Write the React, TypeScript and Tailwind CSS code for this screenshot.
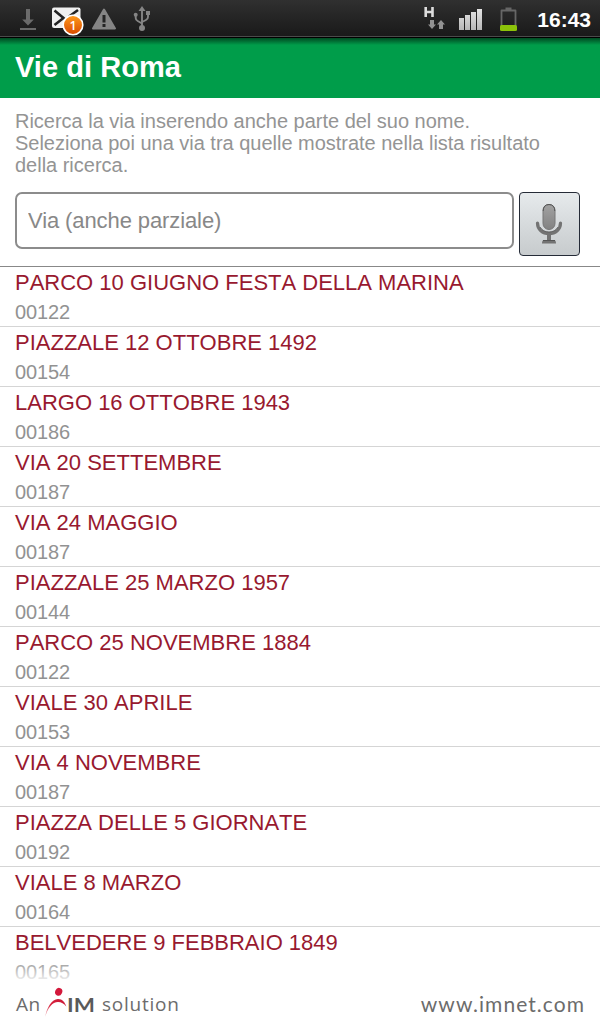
const streets = [
  { name: "PARCO 10 GIUGNO FESTA DELLA MARINA", zip: "00122" },
  { name: "PIAZZALE 12 OTTOBRE 1492", zip: "00154" },
  { name: "LARGO 16 OTTOBRE 1943", zip: "00186" },
  { name: "VIA 20 SETTEMBRE", zip: "00187" },
  { name: "VIA 24 MAGGIO", zip: "00187" },
  { name: "PIAZZALE 25 MARZO 1957", zip: "00144" },
  { name: "PARCO 25 NOVEMBRE 1884", zip: "00122" },
  { name: "VIALE 30 APRILE", zip: "00153" },
  { name: "VIA 4 NOVEMBRE", zip: "00187" },
  { name: "PIAZZA DELLE 5 GIORNATE", zip: "00192" },
  { name: "VIALE 8 MARZO", zip: "00164" },
  { name: "BELVEDERE 9 FEBBRAIO 1849", zip: "00165" },
];

function DownloadIcon() {
  return (
    <svg width="18" height="24" viewBox="0 0 18 24" fill="#6b6b6b">
      <path d="M7 2h4v10.500h3.800L9 18.500 3.200 12.500H7z" />
      <path d="M1 21h16v2H1z" />
    </svg>
  );
}

function MailIcon() {
  return (
    <svg width="34" height="32" viewBox="0 0 34 32">
      <defs>
        <linearGradient id="badge" x1="0" y1="0" x2="0" y2="1">
          <stop offset="0" stopColor="#ff9a1c" />
          <stop offset="1" stopColor="#d94a00" />
        </linearGradient>
      </defs>
      <rect x="0" y="2.500" width="28.500" height="20.500" rx="2" fill="#f0f0f0" />
      <path d="M2.500 5.500l9 7.500-9 7M26 5l-9 6.500" fill="none" stroke="#222" strokeWidth="2.600" />
      <circle cx="21" cy="20" r="9.800" fill="url(#badge)" stroke="#fff" strokeWidth="1.600" />
      <text x="21" y="24.500" textAnchor="middle" fontFamily="Open Sans, sans-serif" fontSize="12.500" fontWeight="600" fill="#fff">
        1
      </text>
    </svg>
  );
}

function WarningIcon() {
  return (
    <svg width="26" height="24" viewBox="0 0 26 24">
      <path d="M13 2.500L24 21.500H2z" fill="#858585" stroke="#858585" strokeWidth="2" strokeLinejoin="round" />
      <path d="M11.500 8h3v7.500h-3zM11.500 17h3v3h-3z" fill="#242424" />
    </svg>
  );
}

function UsbIcon() {
  return (
    <svg width="18" height="26" viewBox="0 0 18 26" fill="#858585">
      <path d="M9 0l3.500 5h-7z" />
      <circle cx="9" cy="22" r="3" />
      <circle cx="2.700" cy="8.700" r="2" />
      <path d="M13 5h4v4h-4z" />
      <path d="M9 4v18M2.700 9v3q0 2 2 3L9 17.500M15 9v2q0 2-2 3l-4 2" fill="none" stroke="#858585" strokeWidth="1.900" />
    </svg>
  );
}

function DataIcon() {
  return (
    <svg width="22" height="24" viewBox="0 0 22 24">
      <path d="M1.700 1v10M8.500 1v10M1.500 6h7" fill="none" stroke="#ddd" strokeWidth="2.600" />
      <path d="M6 14h4v4.500h2L8 23l-4-4.500h2zM15 23h4v-4.500h2L17 14l-4 4.500h2z" fill="#929292" />
    </svg>
  );
}

function SignalIcon() {
  return (
    <svg width="24" height="22" viewBox="0 0 24 22">
      <defs>
        <linearGradient id="bars" x1="0" y1="0" x2="0" y2="22" gradientUnits="userSpaceOnUse">
          <stop offset="0" stopColor="#e4e4e4" />
          <stop offset="1" stopColor="#b4b4b4" />
        </linearGradient>
      </defs>
      <g fill="url(#bars)">
        <rect y="9" width="5" height="12" />
        <rect x="6" y="6" width="5" height="15" />
        <rect x="12" y="3" width="5" height="18" />
        <rect x="18" width="5" height="21" />
      </g>
    </svg>
  );
}

function BatteryIcon() {
  return (
    <svg width="20" height="25" viewBox="0 0 20 25">
      <path d="M2.500 20V3.500h14V20" fill="none" stroke="#666" strokeWidth="1.800" strokeLinejoin="round" />
      <path d="M6.500.5h6v3h-6z" fill="#666" />
      <rect x="1" y="18" width="17" height="6" rx="1.500" fill="#8cc30a" />
    </svg>
  );
}

function MicIcon() {
  return (
    <svg width="28" height="42" viewBox="0 0 28 42">
      <defs>
        <linearGradient id="mic" x1="0" y1="0" x2="0" y2="1">
          <stop offset="0" stopColor="#a2a2a2" />
          <stop offset="1" stopColor="#828282" />
        </linearGradient>
      </defs>
      <rect x="8" y="1.500" width="12" height="25" rx="6" fill="url(#mic)" stroke="#777" />
      <path d="M8.200 8q0-6.500 5.800-6.500T19.800 8" fill="none" stroke="#555" />
      <path d="M2.500 20c0 6.500 5 10.500 11.500 10.500s11.500-4 11.500-10.500" fill="none" stroke="#737373" strokeWidth="3.200" strokeLinecap="round" />
      <path d="M5 24q3 5 9 5t9-5" fill="none" stroke="#555" strokeWidth=".8" />
      <path d="M12 31h4v6h3q2 0 2 3.500H7Q7 37 9 37h3z" fill="#737373" />
      <path d="M8 37.500h12" stroke="#555" />
    </svg>
  );
}

function AimMark() {
  return (
    <svg width="24" height="32" viewBox="0 0 24 32">
      <defs>
        <linearGradient id="leg" x1="0" y1="1" x2="1" y2="0">
          <stop offset="0" stopColor="#e8a0aa" />
          <stop offset=".5" stopColor="#d71f3b" />
          <stop offset="1" stopColor="#c91937" />
        </linearGradient>
      </defs>
      <ellipse cx="14.700" cy="5.800" rx="3.500" ry="4" transform="rotate(25 14.700 5.800)" fill="#d3183b" />
      <path d="M1.300 31C2.500 21.500 8 13 14 13c4.500 0 7 3.500 8.300 7.500C19.800 17.500 17.500 16 14 16 8.500 16 3.500 22 1.300 31z" fill="url(#leg)" />
    </svg>
  );
}

export default function App() {
  return (
    <div className="relative flex h-[1024px] w-[600px] flex-col overflow-hidden bg-white font-['Liberation_Sans',sans-serif]">
      <div className="flex h-[38px] shrink-0 items-start justify-between border-b border-black bg-linear-to-b from-[#303030] to-[#191919] pr-[9px] pl-[19px] shadow-[inset_0_-1px_0_#4a4a4a]">
        <div className="flex items-start">
          <div className="pt-[7px]"><DownloadIcon /></div>
          <div className="ml-[15px] pt-[5px]"><MailIcon /></div>
          <div className="ml-[5px] pt-[7px]"><WarningIcon /></div>
          <div className="ml-4 pt-[6px]"><UsbIcon /></div>
        </div>
        <div className="flex items-start">
          <div className="pt-[6px]"><DataIcon /></div>
          <div className="ml-[13px] pt-[9px]"><SignalIcon /></div>
          <div className="ml-4 pt-[7px]"><BatteryIcon /></div>
          <span className="ml-[18px] pt-[7px] text-[21px] leading-[26px] font-bold text-white">16:43</span>
        </div>
      </div>

      <header className="h-[60px] shrink-0 bg-[#009d4a] bg-linear-to-b from-[#004a22] to-[#009d4a] to-[7px] px-[15px] pt-[11px]">
        <h1 className="text-[29px] leading-9 font-bold tracking-[0.05px] text-white">Vie di Roma</h1>
      </header>

      <section className="h-[169px] shrink-0 border-b border-[#888] px-[15px] pt-3">
        <p className="text-[20px] leading-[22px] tracking-[-0.015px] whitespace-nowrap text-[#949494]">
          Ricerca la via inserendo anche parte del suo nome.
          <br />
          Seleziona poi una via tra quelle mostrate nella lista risultato
          <br />
          della ricerca.
        </p>
        <div className="mt-4 flex items-start gap-[5px]">
          <input
            type="text"
            placeholder="Via (anche parziale)"
            className="h-[57px] w-[499px] rounded-[7px] border-2 border-[#8c8c8c] bg-white px-[11px] text-[22px] tracking-[-0.1px] text-[#888] placeholder:text-[#888]"
          />
          <button
            type="button"
            aria-label="Ricerca vocale"
            className="flex h-16 w-[61px] items-center justify-center rounded-[4px] border border-[#252b37] bg-linear-to-b from-[#e6eaec] to-[#c7cbcd] pr-[2px]"
          >
            <MicIcon />
          </button>
        </div>
      </section>

      <ul className="shrink-0">
        {streets.map((street) => (
          <li key={street.name} className="h-[60px] border-b border-[#d5d5d5] px-[15px] pt-px">
            <div className="text-[22px] leading-[30px] whitespace-nowrap text-[#98192f] [font-kerning:none]">{street.name}</div>
            <div className="text-[20px] leading-[28px] tracking-[-0.1px] text-[#929292]">{street.zip}</div>
          </li>
        ))}
      </ul>

      <footer className="absolute inset-x-0 bottom-0 flex h-[64px] items-end justify-between bg-linear-to-b from-white/0 to-white to-[24px] pr-[15px] pl-4 text-[#6c6c6c]">
        <div className="flex h-[38px] items-start">
          <span className="w-[28px] pt-[6px] font-['Open_Sans',sans-serif] text-[19px] leading-6 tracking-[0.5px]">An</span>
          <AimMark />
          <span className="w-[35px] pt-[7px] -ml-px font-['Lato',sans-serif] text-[19px] leading-6 font-bold text-[#5a5a5a]">
            <span className="inline-block origin-left scale-x-[1.18]">IM</span>
          </span>
          <span className="pt-[6px] font-['Open_Sans',sans-serif] text-[19px] leading-6 tracking-[0.75px]">solution</span>
        </div>
        <span className="h-[32px] font-['Lato',sans-serif] text-[21px] leading-6 tracking-[1.050px]">www.imnet.com</span>
      </footer>
    </div>
  );
}
